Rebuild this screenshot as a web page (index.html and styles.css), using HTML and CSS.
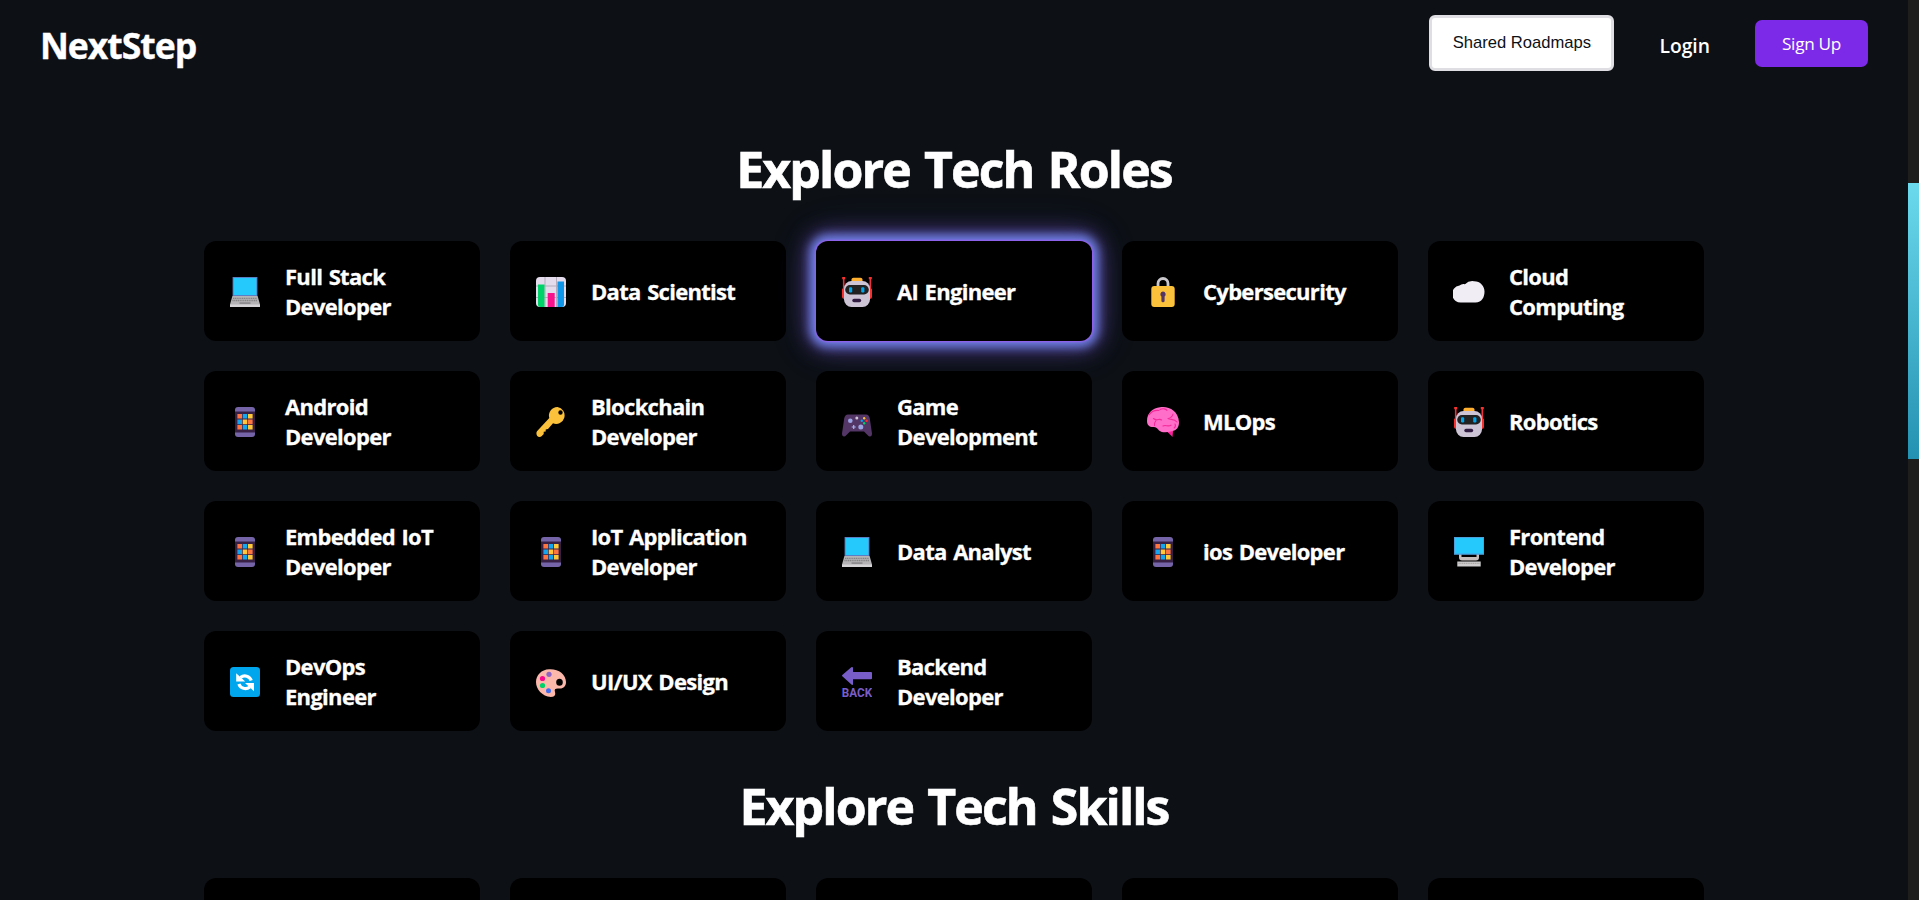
FILE: index.html
```html
<!DOCTYPE html>
<html lang="en">
<head>
    <meta charset="UTF-8">
    <meta name="viewport" content="width=device-width, initial-scale=1.0">
    <title>NextStep</title>
    <link rel="stylesheet" href="styles.css">
</head>
<body>
    <!-- Icon sprite -->
    <svg class="sprite" aria-hidden="true">
        <symbol id="laptop" viewBox="0 0 30 30">
            <path d="M2.6 0h24.8v19H2.6z" fill="#5b7fc4"/>
            <path d="M3.6 1h22.8v17H3.6z" fill="#26c9fc"/>
            <path d="M2.4 19h25.2L30 27.5v2H0v-2z" fill="#b5b3b5"/>
            <path d="M3 21.3h24M2.4 23.5h25.2" stroke="#858385" stroke-width="1.3" stroke-dasharray="1.2 .6"/>
            <path d="M9.5 25.2h11v1.8h-11z" fill="#8e8c8e"/>
            <path d="M0 27.5h30V30H0z" fill="#d5d3d5"/>
        </symbol>
        <symbol id="chart" viewBox="0 0 30 30">
            <rect width="30" height="30" rx="4" fill="#e4dced"/>
            <path d="M9 0v30M20.5 0v30M0 9h30M0 20.5h30" stroke="#b4acbc" stroke-width="1"/>
            <path d="M2 7.5h6.5V30H4a2 2 0 0 1-2-2z" fill="#00d26a"/>
            <path d="M11.7 16h7v14h-7z" fill="#f8128c"/>
            <path d="M21.5 4.5H28V28a2 2 0 0 1-2 2h-4.5z" fill="#0f96e8"/>
        </symbol>
        <symbol id="robot" viewBox="0 0 30 30">
            <path d="M1.7 1v14M28.3 1v14" stroke="#f0303a" stroke-width="1.6"/>
            <path d="M.2 0h3v2.2h-3zM26.8 0h3v2.2h-3z" fill="#f8312f"/>
            <path d="M0 12.5q0-1.5 2-1.5v11q-2-.5-2-2zM30 12.5q0-1.5-2-1.5v11q2-.5 2-2z" fill="#f8312f"/>
            <path d="M9.5 4.5V2.6Q9.5.8 11.5.8h7q2 0 2 1.8v1.9z" fill="#ffb02e"/>
            <rect x="2" y="4" width="26" height="26" rx="7.5" fill="#cdc4d6"/>
            <rect x="3.2" y="8" width="23.6" height="9.5" rx="4.7" fill="#212121"/>
            <rect x="7" y="10.3" width="3.2" height="5.2" rx="1.2" fill="#00a6ed"/>
            <rect x="19.2" y="10.3" width="3.2" height="5.2" rx="1.2" fill="#00a6ed"/>
            <rect x="10.3" y="21.7" width="8.9" height="3.5" rx="1.7" fill="#321b41"/>
        </symbol>
        <symbol id="lock" viewBox="0 0 30 30">
            <path d="M10 11V6.500a5 5 0 0 1 10 0V11" fill="none" stroke="#c9c7cb" stroke-width="2.8"/>
            <rect x="3.3" y="9" width="23.4" height="21" rx="3" fill="#fcc13b"/>
            <path d="M15 14.500a2.800 2.800 0 0 1 1.600 5v4.200a1.600 1.600 0 0 1-3.200 0v-4.200a2.800 2.800 0 0 1 1.600-5z" fill="#533566"/>
        </symbol>
        <symbol id="cloud" viewBox="0 0 32 30">
            <path d="M9 25.500a8.500 8.500 0 0 1-2.500-17 6 6 0 0 1 5.500-1.300 10.500 10.500 0 0 1 9-3c6.500 0 10.500 5 10.500 10.300 0 5.500-2.500 11-9 11z" fill="#f1edf5"/>
        </symbol>
        <symbol id="phone" viewBox="0 0 30 30">
            <rect x="5" width="20" height="30" rx="3" fill="#7565a8"/>
            <path d="M5 4.500h20v21H5z" fill="#382044"/>
            <path d="M7.400 7h4.600v4.600H7.400zM18 12.600h4.600v4.600H18zM7.400 18h4.600v4.600H7.400z" fill="#ff7540"/>
            <path d="M12.700 7h4.600v4.600h-4.600zM7.400 12.600h4.600v4.600H7.400zM12.700 18h4.600v4.600h-4.600z" fill="#14a5ee"/>
            <path d="M18 7h4.600v4.600H18zM12.700 12.600h4.600v4.600h-4.600zM18 18h4.600v4.600H18z" fill="#ffc83a"/>
        </symbol>
        <symbol id="key" viewBox="0 0 30 30">
            <path fill-rule="evenodd" d="M21.500 0A8.500 8.500 0 0 0 13.300 11L1 24.200c-1.500 2 0 5.800 2.500 5.800 1.800 0 3-1.500 4.200-3v-2.200l2-.4v-2l2.300-.3 5-5.800A8.500 8.500 0 1 0 21.500 0zm3 3.300a2.200 2.200 0 1 1 0 4.400 2.200 2.200 0 0 1 0-4.400z" fill="#fcc13b"/>
        </symbol>
        <symbol id="gamepad" viewBox="0 0 30 30">
            <path d="M6 7.500h18q3 0 3.800 4L30 26.500q0 3-2 3-1.200 0-2.500-1.500l-3.500-3.500H8L4.500 28Q3.200 29.500 2 29.500q-2 0-2-3l2.200-15Q3 7.500 6 7.500z" fill="#533566"/>
            <circle cx="8.3" cy="13.8" r="2.3" fill="#9ba5e3"/>
            <circle cx="18.8" cy="20" r="2.5" fill="#9ba5e3"/>
            <path d="M11.700 18v4M9.700 20h4" stroke="#a9b4ef" stroke-width="1.2"/>
            <circle cx="14.8" cy="11" r="1.5" fill="#cdc4d6"/>
            <circle cx="22.2" cy="11.3" r="1.2" fill="#f9c23c"/>
            <circle cx="24.6" cy="13.7" r="1.2" fill="#f8312f"/>
            <circle cx="22.2" cy="16.2" r="1.2" fill="#00d26a"/>
            <circle cx="19.8" cy="13.7" r="1.2" fill="#00a6ed"/>
        </symbol>
        <symbol id="brain" viewBox="0 0 32 30">
            <path d="M20 23l6.200-.5-.7 7.500-4.500-4.500z" fill="#fa1f9a"/>
            <path d="M13 .3c8-1.500 18.500 3 19 15 0 6-3 8.500-8 9.200-4 1-9 1.500-12-1-1-1.500-2-3-5-3.500-4 .5-7-1.500-7-6C0 6 6 1 13 .3z" fill="#ff6ec8"/>
            <path d="M2 8c2-3 6-5 10-4.500M13 2.500c3-1.500 6-.5 7 .8M21 11.500c2 0 4.500-2 5-4.500M21 11.500c3 1.500 6 0 9 3.500M6.500 11.500c3 3 6-.5 8 1.500M9 13.500c-1.500 2-2 3.500-1.500 5M16 19c2.500-1.500 5 1 8-.8M28 17c.8 1.500.5 3-.8 4" fill="none" stroke="#f52a9b" stroke-width="1.1" stroke-linecap="round"/>
        </symbol>
        <symbol id="desktop" viewBox="0 0 30 30">
            <path d="M5 17h20v3.500q0 3-3 3H8q-3 0-3-3z" fill="#c4bdbc"/>
            <path d="M7.500 17h15v3h-15z" fill="#000"/>
            <path d="M0 0h30v17.800H0z" fill="#4ca0dc"/>
            <path d="M1 1h28v15.500H1z" fill="#26c9fc"/>
            <path d="M3.300 24.500h23.400v5H3.300z" fill="#cfcdcd"/>
            <path d="M4.500 26.300h21" stroke="#aaa7a7" stroke-width="1.3" stroke-dasharray="1.2 .6"/>
        </symbol>
        <symbol id="refresh" viewBox="0 0 30 30">
            <rect width="30" height="30" rx="3.5" fill="#00a6ed"/>
            <path d="M10.500 10.500c3.800-3 9.300-1.500 10.700 3" fill="none" stroke="#fff" stroke-width="3.2"/>
            <path d="M6.200 6.200l9 8.300H6.200z" fill="#fff"/>
            <path d="M19.800 20c-3.800 3-9.300 1.500-10.900-3" fill="none" stroke="#fff" stroke-width="3.2"/>
            <path d="M24 24.200l-9-8.300h9z" fill="#fff"/>
        </symbol>
        <symbol id="palette" viewBox="0 0 30 30">
            <path fill-rule="evenodd" d="M13 2.200C22 1.500 30 7 30 15c0 4-2.500 6.700-6.500 6.500-4-.5-5.500.5-4.500 3.500 1 3.500-1 4.900-4 4.900C6 29.500 0 22 0 15 0 8 5.500 2.500 13 2.200zM23.500 11.800a3.300 3.500 0 1 0 0 7 3.300 3.500 0 0 0 0-7z" fill="#fbb8ab"/>
            <circle cx="13" cy="7.3" r="2.6" fill="#8d65c5"/>
            <circle cx="6.5" cy="11.5" r="2.6" fill="#f70a8d"/>
            <circle cx="6.5" cy="18.5" r="2.6" fill="#00d26a"/>
            <circle cx="12.5" cy="23.7" r="2.5" fill="#3f6cf0"/>
        </symbol>
        <symbol id="back" viewBox="0 0 30 30">
            <path d="M10 0q1 0 1 1v4h18q1 0 1 1v5.200q0 1-1 1H11v5q0 1-1 .8L.3 9.300q-.5-.6 0-1.200L9.300.3z" fill="#785dc8"/>
            <text x="-.2" y="29.600" class="back-label" textLength="30.400" lengthAdjust="spacingAndGlyphs">BACK</text>
        </symbol>
    </svg>

    <div class="page">
        <nav class="navbar">
            <a href="#" class="logo">NextStep</a>
            <div class="nav-links">
                <button class="shared-btn">Shared Roadmaps</button>
                <a href="#" class="login">Login</a>
                <a href="#" class="signup">Sign Up</a>
            </div>
        </nav>

        <section class="explore">
            <h2 class="roles-title">Explore Tech Roles</h2>
            <div class="card-grid">
                <div class="card"><svg class="icon"><use href="#laptop"/></svg><h3>Full Stack Developer</h3></div>
                <div class="card"><svg class="icon"><use href="#chart"/></svg><h3>Data Scientist</h3></div>
                <div class="card active"><svg class="icon"><use href="#robot"/></svg><h3>AI Engineer</h3></div>
                <div class="card"><svg class="icon"><use href="#lock"/></svg><h3>Cybersecurity</h3></div>
                <div class="card"><svg class="icon icon-wide"><use href="#cloud"/></svg><h3>Cloud Computing</h3></div>
                <div class="card"><svg class="icon"><use href="#phone"/></svg><h3>Android Developer</h3></div>
                <div class="card"><svg class="icon"><use href="#key"/></svg><h3>Blockchain Developer</h3></div>
                <div class="card"><svg class="icon"><use href="#gamepad"/></svg><h3>Game Development</h3></div>
                <div class="card"><svg class="icon icon-wide"><use href="#brain"/></svg><h3>MLOps</h3></div>
                <div class="card"><svg class="icon"><use href="#robot"/></svg><h3>Robotics</h3></div>
                <div class="card"><svg class="icon"><use href="#phone"/></svg><h3>Embedded IoT Developer</h3></div>
                <div class="card"><svg class="icon"><use href="#phone"/></svg><h3>IoT Application Developer</h3></div>
                <div class="card"><svg class="icon"><use href="#laptop"/></svg><h3>Data Analyst</h3></div>
                <div class="card"><svg class="icon"><use href="#phone"/></svg><h3>ios Developer</h3></div>
                <div class="card"><svg class="icon"><use href="#desktop"/></svg><h3>Frontend Developer</h3></div>
                <div class="card"><svg class="icon"><use href="#refresh"/></svg><h3>DevOps Engineer</h3></div>
                <div class="card"><svg class="icon"><use href="#palette"/></svg><h3>UI/UX Design</h3></div>
                <div class="card"><svg class="icon"><use href="#back"/></svg><h3>Backend Developer</h3></div>
            </div>
        </section>

        <section class="explore">
            <h2 class="skills-title">Explore Tech Skills</h2>
            <div class="card-grid">
                <div class="card"></div>
                <div class="card"></div>
                <div class="card"></div>
                <div class="card"></div>
                <div class="card"></div>
            </div>
        </section>
    </div>

    <div class="scrollbar">
        <div class="scrollbar-thumb"></div>
    </div>
</body>
</html>
```
FILE: styles.css
```css
* {
    margin: 0;
    padding: 0;
    box-sizing: border-box;
}

body {
    display: flex;
    height: 100vh;
    overflow: hidden;
    background: #0d1116;
    color: #fff;
    font-family: 'Segoe UI', 'Open Sans', sans-serif;
}

a {
    color: #fff;
    text-decoration: none;
}

.sprite {
    display: none;
}

.page {
    flex: 1;
    height: 100vh;
    overflow: hidden;
}

/* Navbar */
.navbar {
    display: flex;
    justify-content: space-between;
    height: 90px;
    padding: 0 40px;
}

.logo {
    font-size: 35.5px;
    font-weight: 700;
    line-height: 90px;
    letter-spacing: -1px;
    -webkit-text-stroke: 0.4px #fff;
}

.nav-links {
    display: flex;
    align-items: flex-start;
}

.shared-btn {
    width: 185px;
    height: 56px;
    margin-top: 15px;
    padding-bottom: 1px;
    background: #fff;
    color: #0d1116;
    border: 3px solid #dfdfe3;
    border-radius: 6px;
    font-family: Arial, 'Liberation Sans', sans-serif;
    font-size: 16.6px;
}

.login {
    margin: 15px 45px 0;
    font-size: 19.3px;
    font-weight: 600;
    line-height: 61px;
}

.signup {
    width: 113px;
    height: 47px;
    margin-top: 20px;
    background: #7d2ae8;
    border-radius: 7px;
    font-size: 17.2px;
    line-height: 48px;
    letter-spacing: -0.3px;
    text-align: center;
}

/* Roles and skills */
.explore h2 {
    font-size: 50px;
    font-weight: 700;
    line-height: 70px;
    text-align: center;
    letter-spacing: -1.9px;
    word-spacing: 3px;
    -webkit-text-stroke: 0.6px #fff;
}

.roles-title {
    padding: 44px 0 37px;
}

.skills-title {
    padding: 40px 0 37px;
}

.card-grid {
    display: grid;
    grid-template-columns: repeat(5, 276px);
    grid-auto-rows: 100px;
    gap: 30px;
    justify-content: center;
}

.card {
    display: flex;
    align-items: center;
    gap: 25.5px;
    padding: 0 20px 0 25.5px;
    background: #000;
    border-radius: 12px;
}

.card.active {
    box-shadow: 0 0 2px 1px #9a5cf0, 0 0 10px 6px #6b7fe0, 0 0 20px 9px rgba(110, 80, 190, 0.65), 0 0 45px rgba(80, 70, 200, 0.25);
}

.icon {
    flex: none;
    width: 30px;
    height: 30px;
    margin-top: 2px;
}

.icon-wide {
    width: 32px;
    margin: 2px -1px 0;
}

.back-label {
    fill: #785dc8;
    font-family: Roboto, sans-serif;
    font-size: 12.5px;
    font-weight: 700;
}

.card h3 {
    font-size: 22px;
    font-weight: 700;
    line-height: 30px;
    letter-spacing: -0.7px;
    word-spacing: 1.5px;
    -webkit-text-stroke: 0.3px #fff;
}

/* Page scrollbar */
.scrollbar {
    width: 11px;
    padding-top: 183px;
    background: #1e1e1c;
}

.scrollbar-thumb {
    height: 276px;
    background: linear-gradient(#6bdaed, #2391b1);
}
```
